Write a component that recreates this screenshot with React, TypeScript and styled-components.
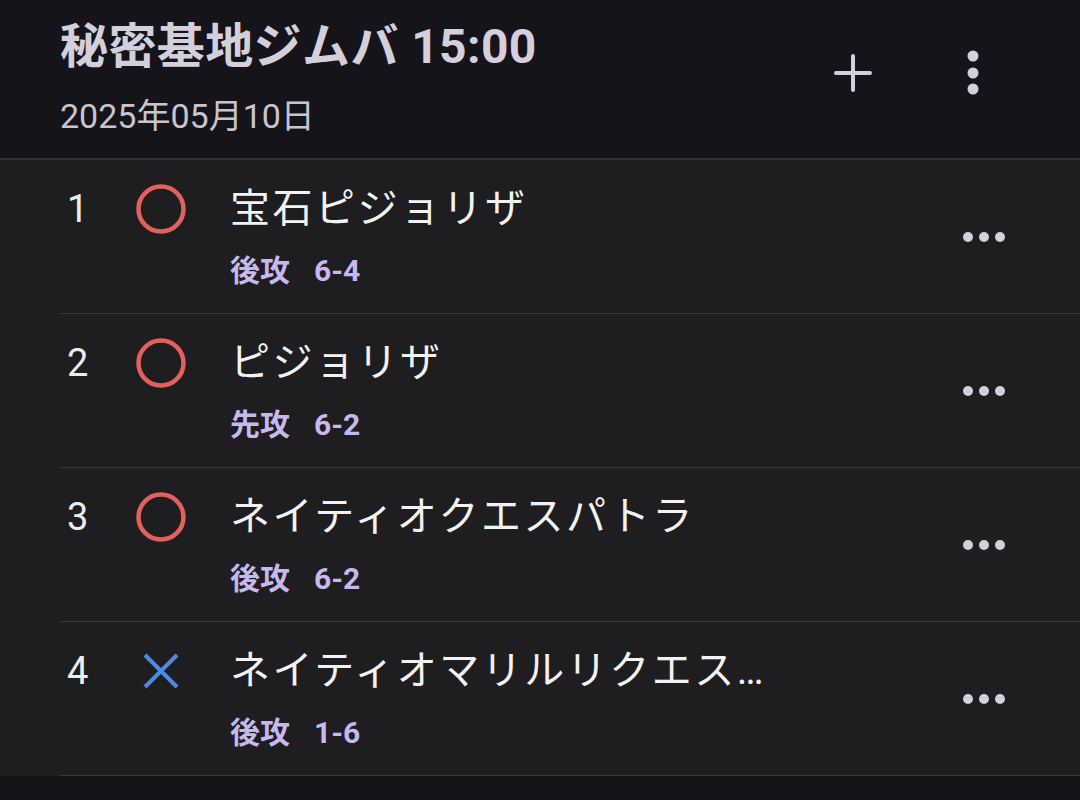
import styled, { createGlobalStyle } from 'styled-components'

const GlobalStyle = createGlobalStyle`
  html, body {
    margin: 0;
    padding: 0;
    background: #16141b;
  }
  body {
    width: 1080px;
    height: 800px;
    overflow: hidden;
    font-family: Roboto, "Noto Sans CJK JP", sans-serif;
  }
`

type Result = 'win' | 'lose'

interface Match {
  no: number
  result: Result
  name: string
  order: string
  score: string
}

const matches: Match[] = [
  { no: 1, result: 'win', name: '宝石ピジョリザ', order: '後攻', score: '6-4' },
  { no: 2, result: 'win', name: 'ピジョリザ', order: '先攻', score: '6-2' },
  { no: 3, result: 'win', name: 'ネイティオクエスパトラ', order: '後攻', score: '6-2' },
  { no: 4, result: 'lose', name: 'ネイティオマリルリクエスパトラ', order: '後攻', score: '1-6' },
]

const Screen = styled.div`
  width: 1080px;
  height: 800px;
  background: #16141b;
  display: flex;
  flex-direction: column;
`

const Header = styled.header`
  height: 160px;
  box-sizing: border-box;
  padding: 19px 0 0 60px;
  display: flex;
  border-bottom: 2px solid #333238;
`

const HeaderText = styled.div`
  flex: 1;
  display: flex;
  flex-direction: column;
`

const Title = styled.h1`
  margin: 0;
  font-size: 48px;
  line-height: 56px;
  font-weight: 700;
  letter-spacing: 0.4px;
  color: #d3cfdb;
`

const DateLine = styled.div`
  margin-top: 21px;
  font-size: 34px;
  line-height: 40px;
  color: #c9c5cf;
`

const Actions = styled.div`
  display: flex;
  align-items: flex-start;
  padding-top: 35px;
  padding-right: 88px;
  gap: 82px;
`

const IconButton = styled.button`
  background: none;
  border: 0;
  padding: 0;
  width: 38px;
  height: 38px;
  display: flex;
  align-items: center;
  justify-content: center;
  color: #d3cfdb;
`

const List = styled.ul`
  list-style: none;
  margin: 0;
  padding: 0;
  background: #1e1e20;
`

const Row = styled.li`
  height: 154px;
  box-sizing: border-box;
  margin-left: 60px;
  border-bottom: 1px solid #38373c;
  display: flex;
  align-items: flex-start;
  padding-top: 25px;
`

const Num = styled.div`
  width: 55px;
  box-sizing: border-box;
  padding-left: 7px;
  font-size: 38px;
  line-height: 48px;
  color: #ececec;
`

const Mark = styled.div`
  width: 92px;
  height: 48px;
  display: flex;
  align-items: center;
  justify-content: center;
`

const Body = styled.div`
  margin-left: 23px;
  flex: 1;
  min-width: 0;
`

const Name = styled.div`
  max-width: 552px;
  font-size: 40px;
  line-height: 48px;
  letter-spacing: 2.5px;
  color: #f2f2f2;
  white-space: nowrap;
  overflow: hidden;
  text-overflow: ellipsis;
`

const Meta = styled.div`
  margin-top: 18px;
  display: flex;
  gap: 24px;
  font-size: 30px;
  line-height: 40px;
  font-weight: 700;
  color: #c6b8f0;
`

const MoreButton = styled.button`
  align-self: center;
  margin-top: -25px;
  margin-right: 72px;
  background: none;
  border: 0;
  padding: 0;
  width: 48px;
  height: 20px;
  display: flex;
  align-items: center;
  justify-content: center;
  color: #d3cfdb;
`

const PlusIcon = () => (
  <svg width="38" height="38" viewBox="0 0 38 38">
    <path d="M19 2v34M2 19h34" stroke="currentColor" strokeWidth="4" strokeLinecap="round" />
  </svg>
)

const KebabIcon = () => (
  <svg width="14" height="46" viewBox="0 0 14 46">
    <circle cx="7" cy="6" r="5.5" fill="currentColor" />
    <circle cx="7" cy="23" r="5.5" fill="currentColor" />
    <circle cx="7" cy="39" r="5.5" fill="currentColor" />
  </svg>
)

const DotsIcon = () => (
  <svg width="46" height="12" viewBox="0 0 46 12">
    <circle cx="7" cy="6" r="5" fill="currentColor" />
    <circle cx="23" cy="6" r="5" fill="currentColor" />
    <circle cx="39" cy="6" r="5" fill="currentColor" />
  </svg>
)

const ResultMark = ({ result }: { result: Result }) =>
  result === 'win' ? (
    <svg width="52" height="52" viewBox="0 0 52 52">
      <circle cx="26" cy="26" r="22.5" fill="none" stroke="#e2615b" strokeWidth="4.5" />
    </svg>
  ) : (
    <svg width="38" height="38" viewBox="0 0 38 38">
      <path d="M3 3l32 32M35 3L3 35" stroke="#4d8be3" strokeWidth="4" />
    </svg>
  )

export default function App() {
  return (
    <>
      <GlobalStyle />
      <Screen>
        <Header>
          <HeaderText>
            <Title>秘密基地ジムバ 15:00</Title>
            <DateLine>2025年05月10日</DateLine>
          </HeaderText>
          <Actions>
            <IconButton aria-label="追加">
              <PlusIcon />
            </IconButton>
            <IconButton aria-label="メニュー">
              <KebabIcon />
            </IconButton>
          </Actions>
        </Header>
        <List>
          {matches.map((m) => (
            <Row key={m.no}>
              <Num>{m.no}</Num>
              <Mark>
                <ResultMark result={m.result} />
              </Mark>
              <Body>
                <Name>{m.name}</Name>
                <Meta>
                  <span>{m.order}</span>
                  <span>{m.score}</span>
                </Meta>
              </Body>
              <MoreButton aria-label="詳細">
                <DotsIcon />
              </MoreButton>
            </Row>
          ))}
        </List>
      </Screen>
    </>
  )
}
